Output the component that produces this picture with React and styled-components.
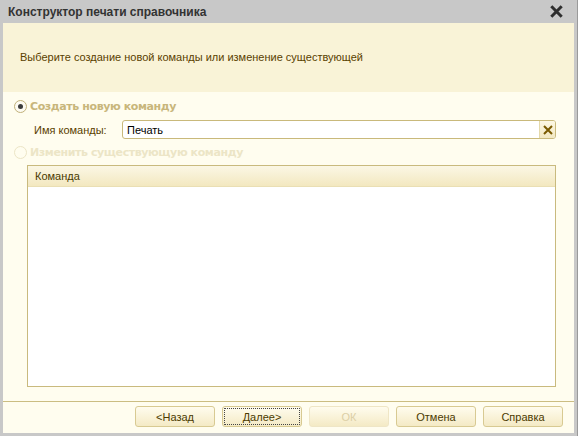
import React from 'react';
import styled, { createGlobalStyle } from 'styled-components';

const Global = createGlobalStyle`
  html, body {
    margin: 0;
    padding: 0;
    background: #ffffff;
  }
  body {
    font-family: "Liberation Sans", Arial, sans-serif;
    font-size: 11px;
  }
  * {
    box-sizing: border-box;
  }
`;

const Window = styled.div`
  width: 578px;
  height: 436px;
  display: flex;
  flex-direction: column;
  background: #c8c8c8;
  padding: 0 3px 3px 3px;
  border-right: 1px solid #9a9a9a;
`;

const TitleBar = styled.div`
  height: 23px;
  flex: none;
  display: flex;
  align-items: center;
  justify-content: space-between;
  padding: 0 11px 0 5px;
  color: #333333;
  font-weight: bold;
  font-size: 12px;
`;

const CloseButton = styled.div`
  width: 14px;
  height: 14px;
  display: flex;
  align-items: center;
  justify-content: center;
`;

const Client = styled.div`
  flex: 1;
  display: flex;
  flex-direction: column;
  background: #fffdef;
  min-height: 0;
`;

const Header = styled.div`
  height: 69px;
  flex: none;
  background: #f9f3d7;
  display: flex;
  align-items: center;
  padding: 0 17px 2px;
  color: #5a4100;
`;

const Body = styled.div`
  flex: 1;
  display: flex;
  flex-direction: column;
  padding: 8px 18px 14px 11px;
  min-height: 0;
`;

const RadioRow = styled.label`
  display: flex;
  align-items: center;
  gap: 3px;
  height: 13px;
  font-family: "DejaVu Sans", sans-serif;
  font-weight: bold;
  font-size: 11px;
  letter-spacing: -0.4px;
  color: ${p => (p.disabled ? '#ece5c6' : '#c8b67b')};
`;

const RadioCircle = styled.span`
  width: 13px;
  height: 13px;
  flex: none;
  border-radius: 50%;
  border: 1px solid ${p => (p.disabled ? '#ece5c6' : '#c1b17a')};
  background: ${p => (p.disabled ? 'transparent' : '#fdfbf2')};
  display: flex;
  align-items: center;
  justify-content: center;
  &::after {
    content: '';
    width: 5px;
    height: 5px;
    border-radius: 50%;
    background: #3c3c3c;
    display: ${p => (p.checked ? 'block' : 'none')};
  }
`;

const FieldRow = styled.div`
  display: flex;
  align-items: center;
  margin: 7px 0 7px 20px;
  height: 19px;
`;

const FieldLabel = styled.span`
  width: 88px;
  color: #5a4100;
`;

const InputBox = styled.div`
  flex: 1;
  height: 19px;
  border: 1px solid #c9b97b;
  border-radius: 3px;
  background: #ffffff;
  display: flex;
  align-items: stretch;
  overflow: hidden;
`;

const InputText = styled.div`
  flex: 1;
  padding: 0 4px;
  display: flex;
  align-items: center;
  color: #000000;
`;

const ClearButton = styled.div`
  width: 16px;
  border-left: 1px solid #e4d9aa;
  background: linear-gradient(#fdf8e4, #f2e8c2);
  display: flex;
  align-items: center;
  justify-content: center;
`;

const Table = styled.div`
  flex: 1;
  margin: 6px 0 0 13px;
  border: 1px solid #c9ba7e;
  background: #ffffff;
  display: flex;
  flex-direction: column;
`;

const TableHead = styled.div`
  height: 21px;
  flex: none;
  display: flex;
  align-items: center;
  padding: 0 7px;
  color: #4a3a00;
  background: linear-gradient(#fbf7e5, #f3e8c0);
  border-bottom: 1px solid #eadfb4;
`;

const Footer = styled.div`
  height: 32px;
  flex: none;
  border-top: 1px solid #cbbd82;
  display: flex;
  justify-content: flex-end;
  align-items: flex-start;
  gap: 7px;
  padding: 4px 11px 0 0;
`;

const Button = styled.div`
  width: 80px;
  height: 21px;
  border: 1px solid ${p => (p.disabled ? '#efe6c6' : '#d8ca92')};
  border-radius: 3px;
  background: linear-gradient(#fffcee, #f4eac5);
  display: flex;
  align-items: center;
  justify-content: center;
  font-size: 11px;
  color: ${p => (p.disabled ? '#dccfa6' : '#4b3a00')};
  position: relative;
  &::after {
    content: '';
    display: ${p => (p.focused ? 'block' : 'none')};
    position: absolute;
    inset: 1px;
    border: 1px dotted #444444;
    border-radius: 1px;
  }
`;

function CrossIcon({ size, color, weight }) {
  return (
    <svg width={size} height={size} viewBox="0 0 10 10">
      <path d="M1 1 L9 9 M9 1 L1 9" stroke={color} strokeWidth={weight} />
    </svg>
  );
}

export default function App() {
  return (
    <>
      <Global />
      <Window>
        <TitleBar>
          <span>Конструктор печати справочника</span>
          <CloseButton>
            <CrossIcon size={13} color="#2e2e2e" weight={2.3} />
          </CloseButton>
        </TitleBar>
        <Client>
          <Header>Выберите создание новой команды или изменение существующей</Header>
          <Body>
            <RadioRow>
              <RadioCircle checked />
              Создать новую команду
            </RadioRow>
            <FieldRow>
              <FieldLabel>Имя команды:</FieldLabel>
              <InputBox>
                <InputText>Печать</InputText>
                <ClearButton>
                  <CrossIcon size={10} color="#7a5a00" weight={2} />
                </ClearButton>
              </InputBox>
            </FieldRow>
            <RadioRow disabled>
              <RadioCircle disabled />
              Изменить существующую команду
            </RadioRow>
            <Table>
              <TableHead>Команда</TableHead>
            </Table>
          </Body>
          <Footer>
            <Button>&lt;Назад</Button>
            <Button focused>Далее&gt;</Button>
            <Button disabled>ОК</Button>
            <Button>Отмена</Button>
            <Button>Справка</Button>
          </Footer>
        </Client>
      </Window>
    </>
  );
}
